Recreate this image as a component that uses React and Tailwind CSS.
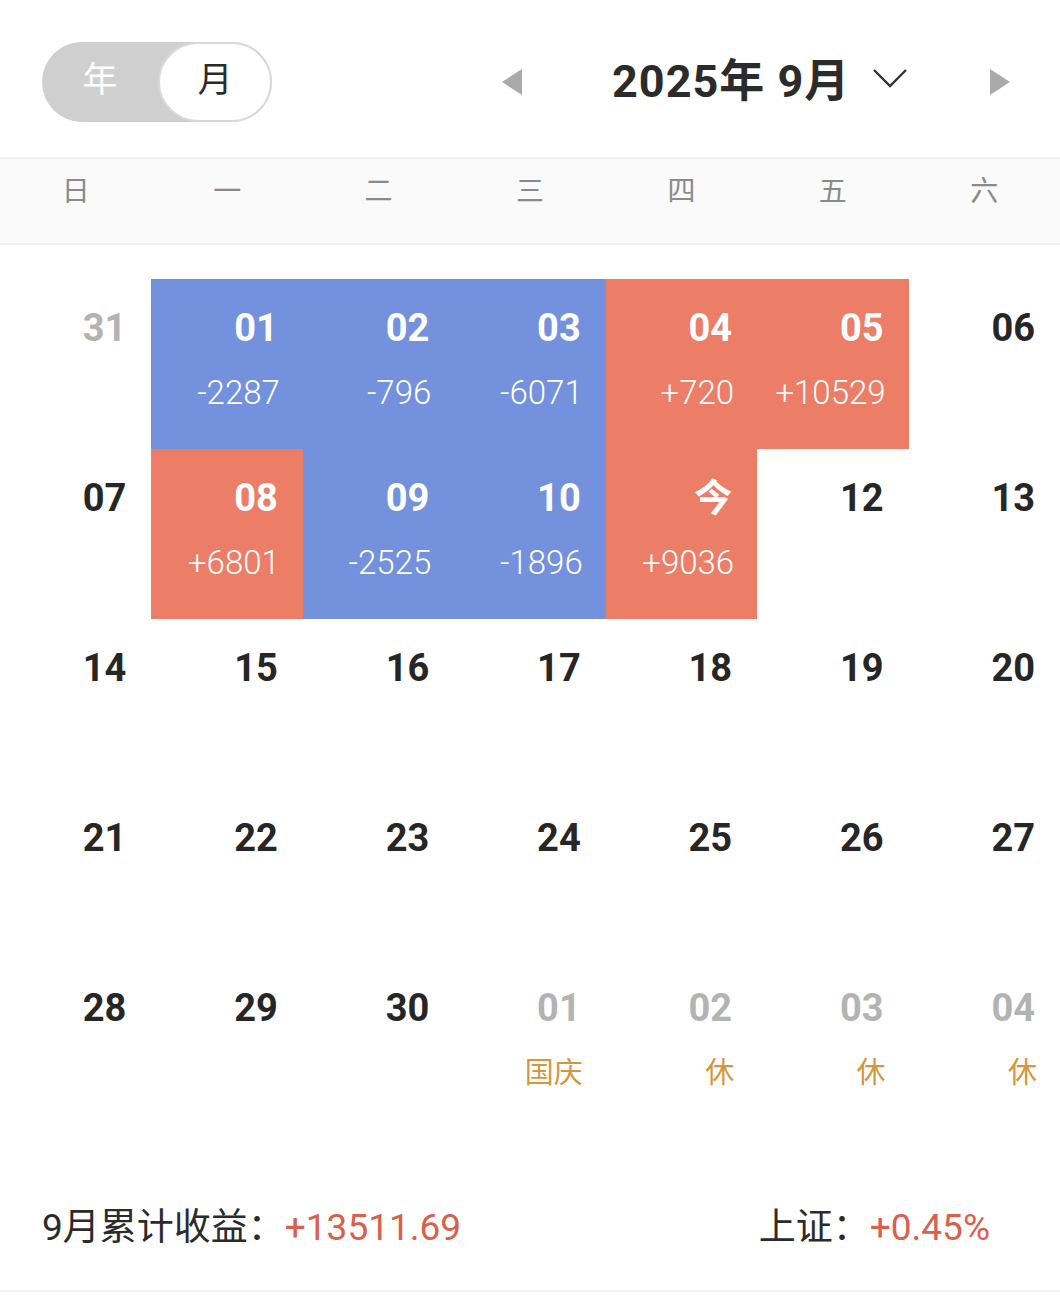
import React from 'react';

const FONT = { fontFamily: 'Roboto, "Noto Sans CJK SC", sans-serif' };

const weekdays = ['日', '一', '二', '三', '四', '五', '六'];

// kind: 'up' (red), 'down' (blue), 'other' (other month), undefined plain
const days = [
  { d: '31', kind: 'other' },
  { d: '01', kind: 'down', v: '-2287' },
  { d: '02', kind: 'down', v: '-796' },
  { d: '03', kind: 'down', v: '-6071' },
  { d: '04', kind: 'up', v: '+720' },
  { d: '05', kind: 'up', v: '+10529' },
  { d: '06' },
  { d: '07' },
  { d: '08', kind: 'up', v: '+6801' },
  { d: '09', kind: 'down', v: '-2525' },
  { d: '10', kind: 'down', v: '-1896' },
  { d: '今', kind: 'up', v: '+9036' },
  { d: '12' },
  { d: '13' },
  ...['14', '15', '16', '17', '18', '19', '20', '21', '22', '23', '24', '25', '26', '27', '28', '29', '30'].map((d) => ({ d })),
  { d: '01', kind: 'other', note: '国庆' },
  { d: '02', kind: 'other', note: '休' },
  { d: '03', kind: 'other', note: '休' },
  { d: '04', kind: 'other', note: '休' },
];

const Cell = ({ day }) => {
  const bg = day.kind === 'up' ? 'bg-[#ec7d67]' : day.kind === 'down' ? 'bg-[#7491dd]' : 'bg-white';
  const filled = day.kind === 'up' || day.kind === 'down';
  const numColor = filled ? 'text-white' : day.kind === 'other' ? 'text-[#b3b3b3]' : 'text-[#262626]';
  return (
    <div className={`h-[170px] flex flex-col items-end pr-[23px] pt-[29px] ${bg}`}>
      <div className={`text-[38px] leading-[40px] font-bold mr-[2px] ${numColor}`}>{day.d}</div>
      {day.v && (
        <div className="mt-[27px] text-[33px] leading-[36px] font-light text-white">{day.v}</div>
      )}
      {day.note && (
        <div className="mt-[27px] text-[29px] leading-[36px] text-[#d4963f]">{day.note}</div>
      )}
    </div>
  );
};

export default function App() {
  return (
    <div className="w-[1060px] h-[1295px] bg-white overflow-hidden" style={FONT}>
      {/* top bar */}
      <div className="h-[157px] flex items-center pl-[42px] pt-[6px]">
        <div className="w-[230px] h-[80px] rounded-full bg-[#cfcfcf] flex items-center">
          <div className="w-[116px] text-center text-[35px] text-white">年</div>
          <div className="w-[114px] h-[80px] rounded-full bg-white border-2 border-[#d9d9d9] flex items-center justify-center text-[35px] text-[#2a2a2a]">
            月
          </div>
        </div>
        <svg width="20" height="26" viewBox="0 0 20 26" className="ml-[230px]">
          <polygon points="20,0 20,26 0,13" fill="#aaaaaa" />
        </svg>
        <div className="ml-[90px] text-[45px] leading-none font-bold text-[#2b2b2b] tracking-[1px]">2025年 9月</div>
        <svg width="34" height="22" viewBox="0 0 34 22" className="ml-[23px] mt-[-4px]">
          <polyline points="1,1 17,17 33,1" fill="none" stroke="#333" strokeWidth="2.4" />
        </svg>
        <svg width="20" height="26" viewBox="0 0 20 26" className="ml-[83px]">
          <polygon points="0,0 0,26 20,13" fill="#aaaaaa" />
        </svg>
      </div>

      {/* weekday header */}
      <div className="h-[88px] grid grid-cols-7 items-center bg-[#fafafa] border-y-2 border-[#f0f0f0] pb-[18px]">
        {weekdays.map((w) => (
          <div key={w} className="text-center text-[28px] text-[#8a8a8a]">{w}</div>
        ))}
      </div>

      {/* days */}
      <div className="grid grid-cols-7 mt-[34px]">
        {days.map((day, i) => (
          <Cell key={i} day={day} />
        ))}
      </div>

      {/* summary */}
      <div className="h-[163px] flex items-start pt-[77px] px-[42px] border-b-2 border-[#f2f2f5]">
        <div className="text-[37px] leading-[44px] text-[#2b2b2b]">
          9月累计收益：<span className="text-[#d9604c]">+13511.69</span>
        </div>
        <div className="ml-auto mr-[28px] text-[37px] leading-[44px] text-[#2b2b2b]">
          上证：<span className="text-[#d9604c]">+0.45%</span>
        </div>
      </div>
    </div>
  );
}
